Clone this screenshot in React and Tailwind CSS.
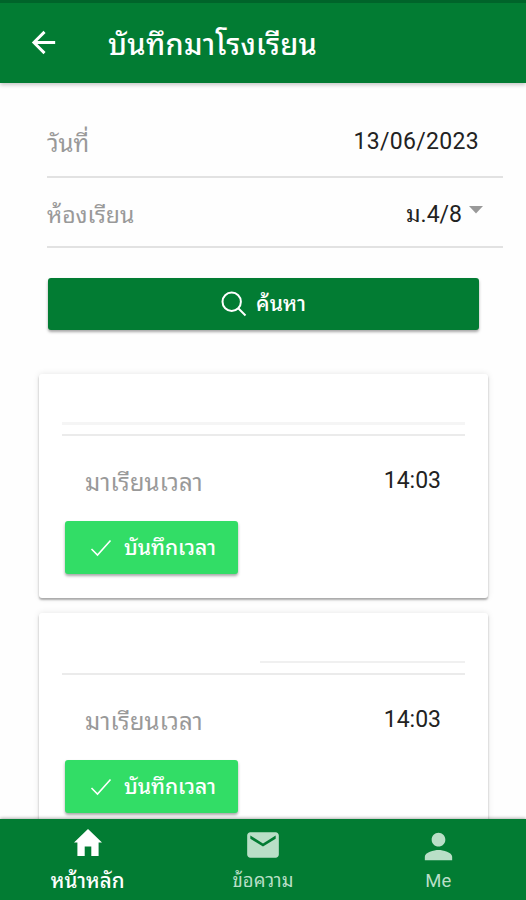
import React from 'react';
import { MdArrowBack, MdMail, MdPerson } from 'react-icons/md';

const records = [
  { id: 1, time: '14:03' },
  { id: 2, time: '14:03' },
];

const SearchIcon = () => (
  <svg width="26" height="26" viewBox="0 0 26 26" fill="none" stroke="currentColor" strokeWidth="2">
    <circle cx="10.7" cy="10.7" r="9.2" />
    <path d="M17.5 17.5 L24.5 24.5" />
  </svg>
);

const CheckIcon = () => (
  <svg width="22" height="18" viewBox="0 0 22 18" fill="none" stroke="currentColor" strokeWidth="1.6">
    <path d="M1.5 10 L7.5 16 L20.5 1.5" />
  </svg>
);

const HomeIcon = () => (
  <svg width="28" height="28" viewBox="0 0 28 28" fill="currentColor" className="mb-[4px]">
    <path d="M14 0 L28 13.5 H24.6 V27 H17.3 V17.5 H10.7 V27 H3.4 V13.5 H0 Z" />
  </svg>
);

const Header = () => (
  <header className="relative z-10 flex h-[83px] shrink-0 items-center border-t-3 border-[#00642a] bg-[#027c33] text-white shadow-[0_2px_4px_rgba(0,0,0,0.22)]">
    <MdArrowBack size={35} className="mb-[2px] ml-[26px]" />
    <h1 className="mt-[4px] ml-[47px] text-[29px] leading-none font-medium tracking-[0.3px] whitespace-nowrap">
      บันทึกมาโรงเรียน
    </h1>
  </header>
);

const RecordCard = ({ time, first }) => (
  <div
    className={`h-[224px] shrink-0 rounded-[3px] bg-white px-[23px] shadow-[0_2px_2px_rgba(0,0,0,0.3),0_0_6px_rgba(0,0,0,0.1)] ${
      first ? '' : 'mt-[15px]'
    }`}
  >
    {/* Name row */}
    <div className="flex h-[62px] flex-col justify-end border-b-2 border-[#ebebeb]">
      {first ? (
        <div className="mb-[9px] h-[3px] bg-[#f5f5f5]" />
      ) : (
        <div className="mb-[10px] ml-[198px] h-[2px] bg-[#f0f0f0]" />
      )}
    </div>

    <div className="flex h-[85px] items-center justify-between pt-[6px] pr-[24px] pl-[23px] text-[23px]">
      <span className="mt-[2px] text-[24px] leading-[36px] tracking-[0.1px] text-[#999]">มาเรียนเวลา</span>
      <span className="text-[#222]">{time}</span>
    </div>

    <button className="ml-[3px] flex h-[53px] w-[173px] items-center rounded-[3px] bg-[#32dd66] pl-[25px] text-white shadow-[0_2px_3px_rgba(0,0,0,0.35)]">
      <CheckIcon />
      <span className="mt-[2px] ml-[12px] text-[21px] font-medium whitespace-nowrap">บันทึกเวลา</span>
    </button>
  </div>
);

const TabItem = ({ icon, label, active }) => (
  <button className={`flex flex-1 flex-col items-center pt-[8px] ${active ? 'text-white' : 'text-[#b9dfc7]'}`}>
    <span className="flex h-[36px] items-center">{icon}</span>
    <span
      className={`mt-[5px] leading-[26px] whitespace-nowrap ${
        active ? 'text-[20.5px] font-medium' : 'text-[18.5px]'
      }`}
    >
      {label}
    </span>
  </button>
);

const App = () => {
  return (
    <div className="flex h-[900px] w-[526px] flex-col overflow-hidden bg-white font-['Roboto','Noto_Sans_Thai_Looped','Noto_Looped_Thai','Droid_Sans_Thai','Loma','Waree','Garuda','Noto_Sans_Thai_UI',sans-serif]">
      <Header />

      <main className="flex min-h-0 flex-1 flex-col overflow-hidden bg-[#fefefe]">
        <div className="ml-[47px] shrink-0 text-[23px]">
          <div className="mr-[23px] flex h-[95px] items-center justify-between border-b-2 border-[#e2e2e2] pt-[25px] pr-[24px]">
            <span className="mt-[4px] text-[24px] leading-[36px] text-[#999]">วันที่</span>
            <span className="tracking-[0.3px] text-[#222]">13/06/2023</span>
          </div>
          <div className="mr-[23px] flex h-[70px] items-center justify-between border-b-2 border-[#e2e2e2] pt-[5px] pr-[20px]">
            <span className="mt-[3px] text-[#999]">ห้องเรียน</span>
            <span className="flex items-center text-[#222]">
              <span className="mt-[2px]">ม.4/8</span>
              <svg width="14" height="8" viewBox="0 0 14 8" className="mb-[10px] ml-[7px] fill-[#999]">
                <path d="M0 0 H14 L7 7.5 Z" />
              </svg>
            </span>
          </div>
        </div>

        <button className="mt-[30px] ml-[48px] flex h-[52px] w-[431px] shrink-0 items-center justify-center rounded-[3px] bg-[#027c33] text-white shadow-[0_2px_3px_rgba(0,0,0,0.35)]">
          <SearchIcon />
          <span className="mt-[2px] ml-[9px] text-[21px] font-medium">ค้นหา</span>
        </button>

        {/* Attendance list */}
        <div className="mt-[44px] mr-[38px] ml-[39px] flex flex-col">
          {records.map((record, index) => (
            <RecordCard key={record.id} time={record.time} first={index === 0} />
          ))}
        </div>
      </main>

      <nav className="relative z-10 flex h-[81px] shrink-0 bg-[#027c33] shadow-[0_-1px_3px_rgba(0,0,0,0.3)]">
        <TabItem icon={<HomeIcon />} label="หน้าหลัก" active />
        <TabItem icon={<MdMail size={38} />} label="ข้อความ" />
        <TabItem icon={<MdPerson size={41} className="mt-[3px]" />} label="Me" />
      </nav>
    </div>
  );
};

export default App;
